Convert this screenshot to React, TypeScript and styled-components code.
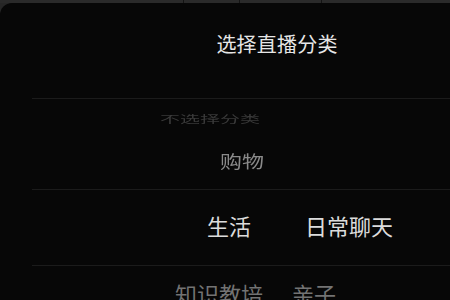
import React from "react";
import styled, { createGlobalStyle } from "styled-components";

const GlobalStyle = createGlobalStyle`
    html, body {
        margin: 0;
        padding: 0;
        background: #262626;
        overflow: hidden;
    }
    body {
        font-family: "Noto Sans CJK SC", "Noto Sans", sans-serif;
    }
`;

const Page = styled.div`
    display: flex;
    flex-direction: column;
    width: 450px;
    height: 300px;
`;

const TopStrip = styled.div`
    display: flex;
    flex-shrink: 0;
    height: 3px;
    background: #2a2a2a;
`;

const StripSegment = styled.div<{ w: number }>`
    width: ${(p) => p.w}px;
    border-right: 1px solid #141414;
    box-sizing: border-box;
`;

const Sheet = styled.div`
    flex: 1;
    display: flex;
    flex-direction: column;
    background: #070707;
    border-top-left-radius: 12px;
    overflow: hidden;
`;

const Header = styled.div`
    display: flex;
    flex-shrink: 0;
    justify-content: center;
    height: 95px;
    box-sizing: border-box;
    padding: 28px 0 0 104px;
`;

const Title = styled.div`
    font-size: 20px;
    line-height: 26px;
    height: 26px;
    color: #e6e6e6;
    letter-spacing: 0.2px;
`;

const Divider = styled.div`
    flex-shrink: 0;
    height: 1px;
    margin-left: 32px;
    background: #1b1b1b;
`;

const Section = styled.div<{ h: number; top: number }>`
    display: flex;
    flex-direction: column;
    flex-shrink: 0;
    height: ${(p) => p.h}px;
    box-sizing: border-box;
    padding-top: ${(p) => p.top}px;
`;

const Row = styled.div<{ indent: number; gap: number; mt?: number }>`
    display: flex;
    gap: ${(p) => p.gap}px;
    padding-left: ${(p) => p.indent}px;
    margin-top: ${(p) => p.mt || 0}px;
`;

const Item = styled.span<{ size: number; tone: string; squash?: number; soft?: boolean }>`
    display: block;
    font-size: ${(p) => p.size}px;
    line-height: ${(p) => p.size + 4}px;
    color: ${(p) => p.tone};
    white-space: nowrap;
    transform: scaleY(${(p) => p.squash || 1});
    transform-origin: center;
    filter: ${(p) => (p.soft ? "blur(0.5px)" : "none")};
`;

export default function App() {
    return (
        <Page>
            <GlobalStyle />
            <TopStrip>
                <StripSegment w={184} />
                <StripSegment w={56} />
                <StripSegment w={82} />
            </TopStrip>
            <Sheet>
                <Header>
                    <Title>选择直播分类</Title>
                </Header>
                <Divider />
                <Section h={90} top={8}>
                    <Row indent={160} gap={0}>
                        <Item size={20} tone="#3a3a3a" squash={0.5} soft>不选择分类</Item>
                    </Row>
                    <Row indent={220} gap={0} mt={16}>
                        <Item size={22} tone="#8a8a8a" squash={0.8}>购物</Item>
                    </Row>
                </Section>
                <Divider />
                <Section h={75} top={22}>
                    <Row indent={207} gap={54}>
                        <Item size={22} tone="#dcdcdc">生活</Item>
                        <Item size={22} tone="#dcdcdc">日常聊天</Item>
                    </Row>
                </Section>
                <Divider />
                <Section h={40} top={14}>
                    <Row indent={175} gap={29}>
                        <Item size={22} tone="#737373">知识教培</Item>
                        <Item size={22} tone="#737373">亲子</Item>
                    </Row>
                </Section>
            </Sheet>
        </Page>
    );
}
